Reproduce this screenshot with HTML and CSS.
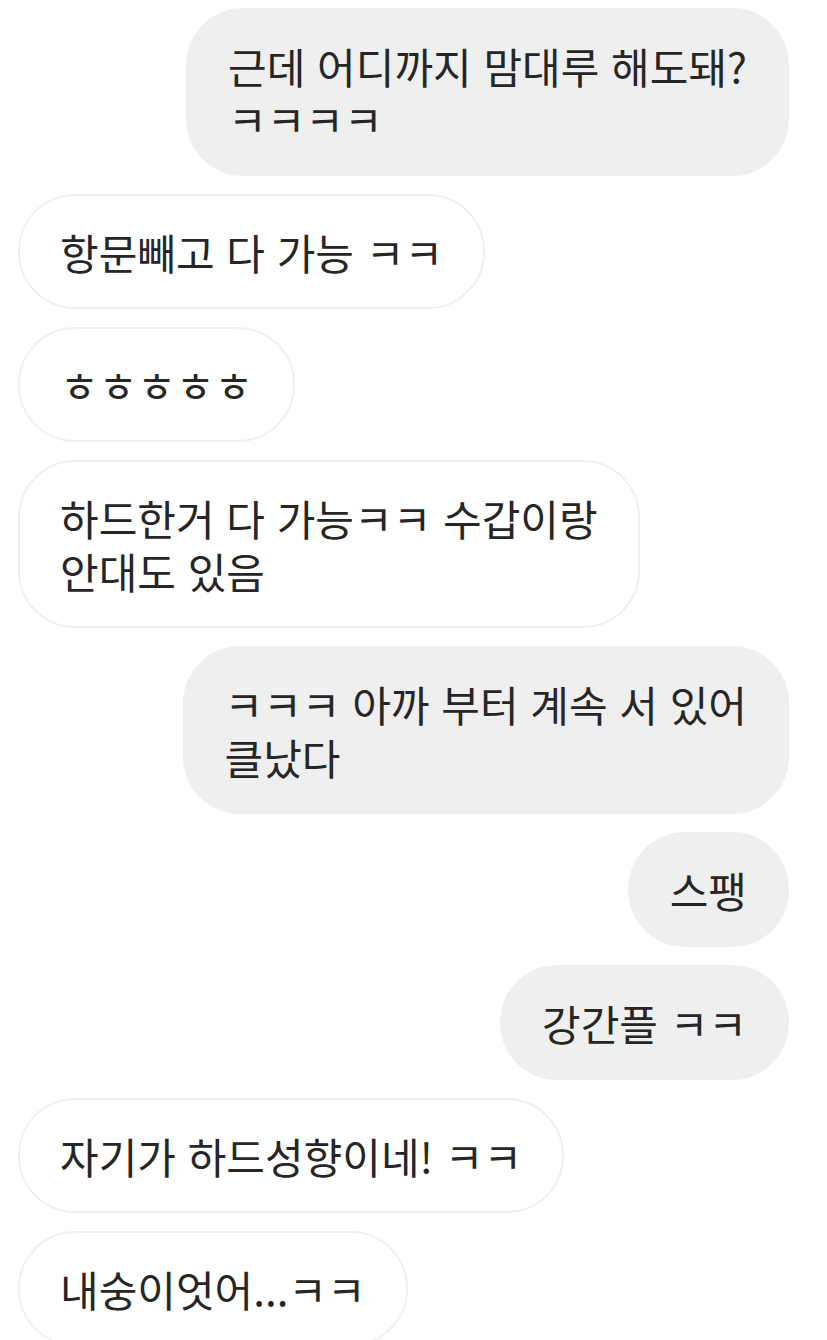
FILE: index.html
```html
<!DOCTYPE html>
<html lang="ko">
<head>
    <meta charset="UTF-8">
    <meta name="viewport" content="width=device-width, initial-scale=1.0">
    <title>Chat</title>
    <link rel="stylesheet" href="styles.css">
</head>
<body>
    <div class="chat">
        <div class="msg sent">근데 어디까지 맘대루 해도돼?<br>ㅋㅋㅋㅋ</div>
        <div class="msg recv">항문빼고 다 가능 ㅋㅋ</div>
        <div class="msg recv">ㅎㅎㅎㅎㅎ</div>
        <div class="msg recv">하드한거 다 가능ㅋㅋ 수갑이랑<br>안대도 있음</div>
        <div class="msg sent">ㅋㅋㅋ 아까 부터 계속 서 있어<br>클났다</div>
        <div class="msg sent">스팽</div>
        <div class="msg sent">강간플 ㅋㅋ</div>
        <div class="msg recv">자기가 하드성향이네! ㅋㅋ</div>
        <div class="msg recv">내숭이엇어...ㅋㅋ</div>
    </div>
</body>
</html>
```

FILE: styles.css
```css
body {
    margin: 0;
    padding: 0;
    background-color: #ffffff;
    font-family: "Noto Sans CJK KR", "Noto Sans", sans-serif;
    color: #262626;
}
.chat {
    display: flex;
    flex-direction: column;
    gap: 18px;
    padding: 8px 38px 0 18px;
}
.msg {
    font-size: 42px;
    line-height: 53px;
    padding: 31px 42px;
    border-radius: 57px;
    box-sizing: border-box;
    white-space: nowrap;
}
.sent {
    align-self: flex-end;
    background-color: #efefef;
}
.recv {
    align-self: flex-start;
    background-color: #ffffff;
    border: 2px solid #efefef;
    padding: 29px 40px;
}
```
